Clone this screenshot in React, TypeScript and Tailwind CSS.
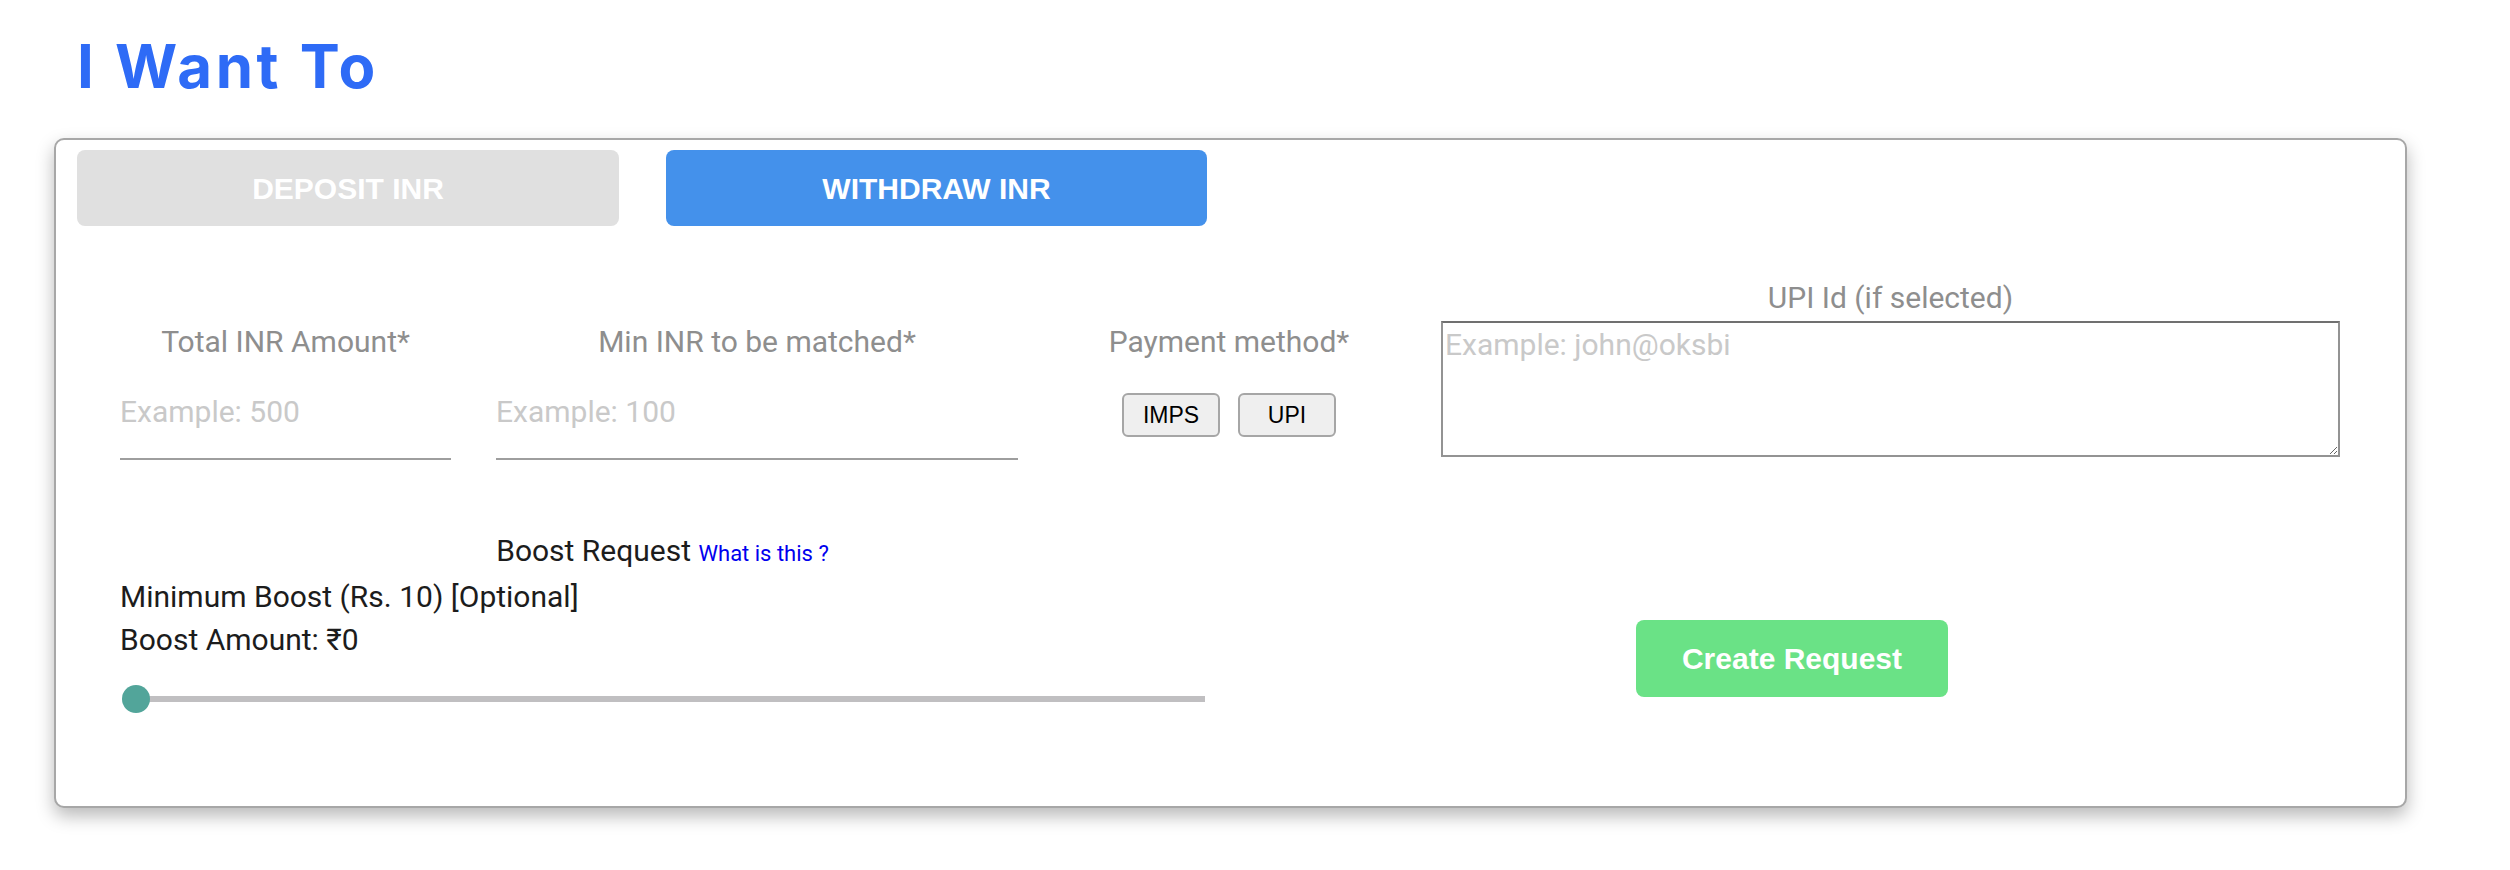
import React from "react";

export default function App() {
  return (
    <div className="w-[2510px] h-[870px] bg-white font-['Roboto',sans-serif] overflow-hidden">
      <h1 className="pl-[77px] pt-[36px] text-[60px] leading-[60px] font-bold tracking-[3.5px] text-[#2e6bf6] font-['Inter',sans-serif]">
        I Want To
      </h1>
      <div className="ml-[54px] mt-[42px] w-[2353px] h-[670px] border-2 border-[#a7a7a7] rounded-[10px] bg-white shadow-[0_8px_18px_rgba(0,0,0,0.28)] pl-[21px] pt-[10px]">
        <div className="flex gap-[47px]">
          <button className="w-[542px] h-[76px] rounded-[8px] bg-[#e0e0e0] text-white text-[30px] font-bold font-['Liberation_Sans',Arial,sans-serif]">
            DEPOSIT INR
          </button>
          <button className="w-[541px] h-[76px] rounded-[8px] bg-[#4491eb] text-white text-[30px] font-bold font-['Liberation_Sans',Arial,sans-serif]">
            WITHDRAW INR
          </button>
        </div>

        <div className="ml-[43px] mt-[54px] flex items-start">
          <div className="w-[331px]">
            <div className="mt-[44px] text-center text-[30px] leading-[36px] text-[#8e8e8e]">Total INR Amount*</div>
            <input
              className="block w-full h-[100px] pt-[4px] border-b-2 border-[#9e9e9e] text-[30px] outline-none placeholder:text-[#c9c9c9] bg-transparent"
              placeholder="Example: 500"
            />
          </div>
          <div className="ml-[45px] w-[522px]">
            <div className="mt-[44px] text-center text-[30px] leading-[36px] text-[#8e8e8e]">Min INR to be matched*</div>
            <input
              className="block w-full h-[100px] pt-[4px] border-b-2 border-[#9e9e9e] text-[30px] outline-none placeholder:text-[#c9c9c9] bg-transparent"
              placeholder="Example: 100"
            />
          </div>
          <div className="ml-[81px] w-[260px]">
            <div className="mt-[44px] text-center text-[30px] leading-[36px] text-[#8e8e8e]">Payment method*</div>
            <div className="mt-[33px] flex justify-center gap-[18px]">
              <button className="w-[98px] h-[44px] rounded-[6px] border-2 border-[#a6a6a6] bg-[#efefef] text-black text-[23px] font-['Liberation_Sans',Arial,sans-serif]">
                IMPS
              </button>
              <button className="w-[98px] h-[44px] rounded-[6px] border-2 border-[#a6a6a6] bg-[#efefef] text-black text-[23px] font-['Liberation_Sans',Arial,sans-serif]">
                UPI
              </button>
            </div>
          </div>
          <div className="ml-[82px] w-[899px]">
            <div className="text-center text-[30px] leading-[36px] text-[#8e8e8e]">UPI Id (if selected)</div>
            <textarea
              className="block mt-[5px] w-full h-[136px] border-2 border-[#939393] border-t-[#707070] pt-[4px] pl-[2px] text-[30px] leading-[36px] outline-none placeholder:text-[#c9c9c9]"
              placeholder="Example: john@oksbi"
            />
          </div>
        </div>

        <div className="ml-[43px] mt-[69px] flex items-start">
          <div className="w-[1085px] text-[30px] leading-[43px] text-[#1c1c1c]">
            <div className="text-center">
              Boost Request{" "}
              <a className="text-[22px] text-[#0000ee]">What is this ?</a>
            </div>
            <div>Minimum Boost (Rs. 10) [Optional]</div>
            <div>Boost Amount: ₹0</div>
            <div className="mt-[24px] ml-[2px] flex items-center h-[28px]">
              <div className="w-[28px] h-[28px] rounded-full bg-[#52a59a] shrink-0 z-10" />
              <div className="flex-1 h-[6px] bg-[#c0bfc1] -ml-[14px]" />
            </div>
          </div>
          <button className="ml-[431px] mt-[91px] w-[312px] h-[77px] rounded-[8px] bg-[#6ae286] text-white text-[30px] font-bold font-['Liberation_Sans',Arial,sans-serif]">
            Create Request
          </button>
        </div>
      </div>
    </div>
  );
}
